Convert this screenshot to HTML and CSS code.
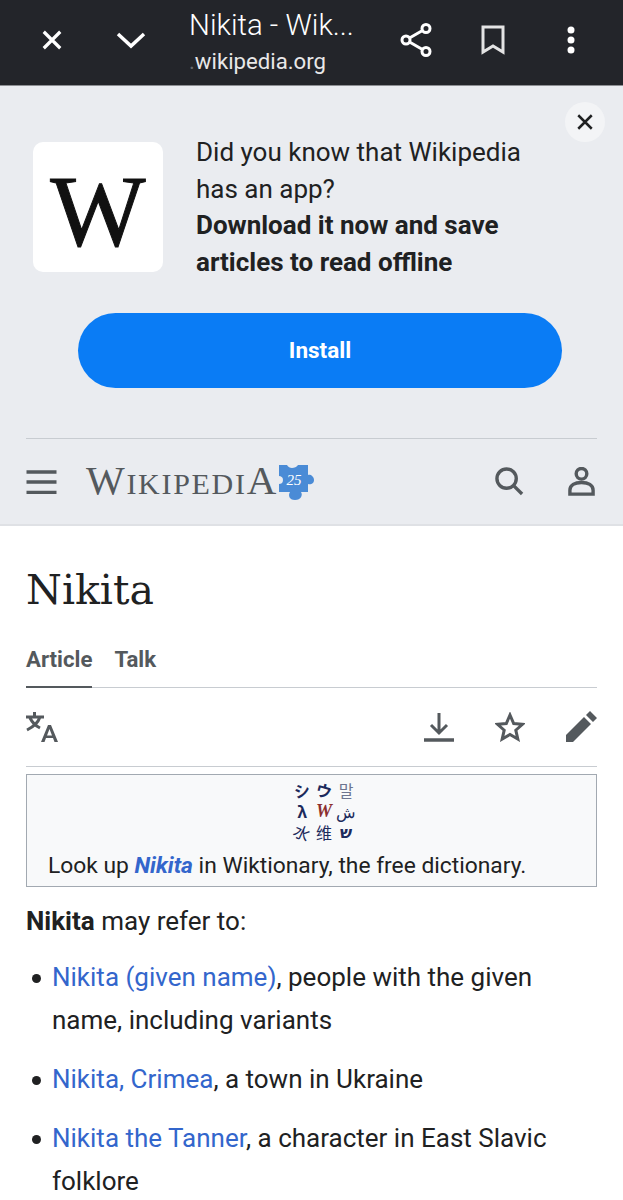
FILE: index.html
```html
<!DOCTYPE html>
<html lang="en">

<head>
    <meta charset="UTF-8">
    <meta name="viewport" content="width=device-width, initial-scale=1.0">
    <title>Nikita - Wikipedia</title>
    <link rel="stylesheet" href="styles.css">
</head>

<body>
    <div id="app">
        <nav class="tab-bar">
            <svg class="tab-icon tab-close" viewBox="0 0 24 24"><path d="M3 3 21 21M21 3 3 21" /></svg>
            <svg class="tab-icon tab-down" viewBox="0 0 30 18"><path d="M2 3 15 15 28 3" /></svg>
            <div class="tab-title">
                <div class="tab-name">Nikita - Wik...</div>
                <div class="tab-url"><span class="tab-dot">.</span>wikipedia.org</div>
            </div>
            <svg class="tab-icon tab-share" viewBox="0 0 32 34">
                <circle cx="6" cy="17" r="4" />
                <circle cx="26" cy="5.500" r="4" />
                <circle cx="26" cy="28.500" r="4" />
                <path d="M9.500 15 22.500 7.500M9.500 19 22.500 26.500" />
            </svg>
            <svg class="tab-icon tab-mark" viewBox="0 0 24 30"><path d="M2 2H22V27L12 21 2 27Z" /></svg>
            <svg class="tab-more" viewBox="0 0 8 28">
                <circle cx="4" cy="4" r="3.500" />
                <circle cx="4" cy="14" r="3.500" />
                <circle cx="4" cy="24" r="3.500" />
            </svg>
        </nav>

        <section class="banner">
            <button class="banner-close">
                <svg viewBox="0 0 16 16"><path d="M2 2 14 14M14 2 2 14" /></svg>
            </button>
            <div class="banner-row">
                <div class="app-logo">W</div>
                <p class="banner-text">Did you know that Wikipedia has an app?<br><b>Download it now and save articles to read offline</b></p>
            </div>
            <button class="install">Install</button>
        </section>

        <header class="site-header">
            <div class="header-inner">
                <svg class="hamburger" viewBox="0 0 30 24"><path d="M0 2H30M0 12H30M0 22.500H30" /></svg>
                <div class="wordmark"><span class="big">W</span>IKIPEDI<span class="big">A</span></div>
                <svg class="puzzle" viewBox="0 0 36 36">
                    <path d="M1 1H9C10 3 12 4 14 4S19 3 20 1H30V11C32 10 36 12 36 16S32 21 30 20V28H23C25 31 23 36 17 36S10 31 12 28H1V20C3 20 5 19 5 16S3 12 1 12Z" />
                    <text x="16" y="21" class="puzzle-num">25</text>
                </svg>
                <svg class="head-icon search" viewBox="0 0 30 30">
                    <circle cx="12" cy="12" r="10" />
                    <path d="M19 19 28 28" />
                </svg>
                <svg class="head-icon user" viewBox="0 0 30 30">
                    <circle cx="15" cy="7" r="5.500" />
                    <path d="M3 28V24C3 19 8 16 15 16S27 19 27 24V28Z" />
                </svg>
            </div>
        </header>

        <main class="article">
            <h1>Nikita</h1>
            <div class="tabs">
                <span class="tab active">Article</span>
                <span class="tab">Talk</span>
            </div>
            <div class="tools">
                <svg class="tool lang" viewBox="0 0 32 30">
                    <path class="line" d="M0 5H18M8.500 0V5M14 5C12 11 7 15 1 18M4 6C6 10 10 14 14 16" />
                    <path class="solid" fill-rule="evenodd" d="M15 30 22 13H25L32 30H28.500L27 26H20L18.500 30ZM21 23.500H26L23.500 17Z" />
                </svg>
                <svg class="tool dl" viewBox="0 0 30 30">
                    <path class="line" d="M15 1V20M7 13 15 21 23 13" />
                    <path class="line thick" d="M0 28H30" />
                </svg>
                <svg class="tool star" viewBox="0 0 30 30">
                    <path class="line" d="M15 3 18.700 11.500 27.500 12.300 20.800 18.200 22.800 27 15 22.400 7.200 27 9.200 18.200 2.500 12.300 11.300 11.500Z" />
                </svg>
                <svg class="tool pen" viewBox="0 0 32 32">
                    <path class="solid" d="M1 31V24L19 6 26 13 8 31ZM21 4 25 0 32 7 28 11Z" />
                </svg>
            </div>

            <div class="wikt-box">
                <div class="wikt-logo">
                    <span class="g1">シ</span><span class="g2">ウ</span><span class="g3">말</span>
                    <span class="g4">λ</span><span class="g5">W</span><span class="g6">ش</span>
                    <span class="g7">水</span><span class="g8">维</span><span class="g9">ש</span>
                </div>
                <div class="wikt-text">Look up <a href="#"><b><i>Nikita</i></b></a> in Wiktionary, the free dictionary.</div>
            </div>

            <p class="lead"><b>Nikita</b> may refer to:</p>
            <ul class="refs">
                <li><a href="#">Nikita (given name)</a>, people with the given name, including variants</li>
                <li><a href="#">Nikita, Crimea</a>, a town in Ukraine</li>
                <li><a href="#">Nikita the Tanner</a>, a character in East Slavic folklore</li>
            </ul>
        </main>
    </div>
</body>

</html>
```
FILE: styles.css
```css
html,
body {
    height: 100%;
    margin: 0;
    padding: 0;
    overflow: hidden;
    background-color: white;
    font-family: Roboto, "Liberation Sans", sans-serif;
}


#app {
    display: flex;
    flex-direction: column;
    height: 1200px;
    overflow: hidden;
}


.tab-bar {
    display: flex;
    align-items: center;
    height: 85px;
    flex: none;
    background-color: #23252a;
    border-bottom: 1px solid #8d8f93;
    color: white;
}

.tab-icon {
    flex: none;
    fill: none;
    stroke: white;
    stroke-width: 3.500;
    margin-top: -6px;
}

.tab-close {
    width: 22px;
    height: 22px;
    margin-left: 41px;
}

.tab-down {
    width: 30px;
    height: 18px;
    margin-left: 53px;
}

.tab-title {
    width: 182px;
    margin-left: 43px;
    flex: none;
    margin-top: -1px;
}

.tab-name {
    font-size: 29.400px;
    font-weight: 300;
    line-height: 34px;
}

.tab-url {
    font-size: 22.200px;
    line-height: 30px;
    margin-top: 4px;
    color: #e8e8e8;
}

.tab-dot {
    color: #66686c;
}

.tab-share {
    width: 32px;
    height: 34px;
    margin-left: 29px;
    stroke-width: 3;
}

.tab-mark {
    width: 24px;
    height: 30px;
    margin-left: 49px;
    stroke-width: 3;
    stroke: #e4e4e4;
}

.tab-more {
    width: 8px;
    height: 28px;
    margin-left: 62px;
    margin-top: -6px;
    fill: white;
}


.banner {
    position: relative;
    flex: none;
    height: 352px;
    box-sizing: border-box;
    background-color: #eaecf0;
    padding-top: 48px;
}

.banner-close {
    position: absolute;
    top: 16px;
    right: 18px;
    width: 40px;
    height: 40px;
    padding: 11px;
    border: 0;
    border-radius: 50%;
    background-color: #f3f4f6;
}

.banner-close svg {
    display: block;
    fill: none;
    stroke: #202122;
    stroke-width: 2.200;
}

.banner-row {
    display: flex;
    align-items: center;
    padding-left: 33px;
}

.app-logo {
    width: 130px;
    height: 130px;
    flex: none;
    background-color: white;
    border-radius: 10px;
    color: #111;
    font-family: "Liberation Serif", serif;
    font-size: 101px;
    line-height: 140px;
    text-align: center;
    -webkit-text-stroke: 1px #111;
}

.banner-text {
    margin: 0 0 0 33px;
    width: 350px;
    font-size: 26px;
    line-height: 36.500px;
    color: #202122;
}

.install {
    display: block;
    width: 484px;
    height: 75px;
    margin: 33px 0 0 78px;
    padding: 0 0 2px;
    border: 0;
    border-radius: 38px;
    background-color: #0a7cf5;
    color: white;
    font-family: inherit;
    font-size: 22.500px;
    font-weight: 700;
}


.site-header {
    flex: none;
    height: 88px;
    box-sizing: border-box;
    background-color: #eaecf0;
    border-bottom: 2px solid #dfe1e5;
    padding: 0 26px;
}

.header-inner {
    display: flex;
    align-items: center;
    height: 86px;
    border-top: 1px solid #c8ccd1;
    box-sizing: border-box;
}

.hamburger {
    width: 31px;
    height: 24px;
    flex: none;
    stroke: #54595d;
    stroke-width: 3.500;
    fill: none;
}

.wordmark {
    margin-left: 29px;
    flex: none;
    font-family: "Liberation Serif", serif;
    font-size: 30px;
    letter-spacing: 1.700px;
    color: #54595d;
    line-height: 44px;
}

.wordmark .big {
    font-size: 41px;
}

.puzzle {
    width: 36px;
    height: 36px;
    flex: none;
    overflow: visible;
    fill: #4a8bd6;
}

.puzzle-num {
    fill: white;
    font-family: "Liberation Serif", serif;
    font-style: italic;
    font-size: 15px;
    text-anchor: middle;
}

.head-icon {
    width: 29px;
    height: 29px;
    flex: none;
    fill: none;
    stroke: #54595d;
    stroke-width: 3.500;
}

.search {
    margin-left: auto;
    margin-right: 1px;
}

.user {
    margin-left: 42px;
    margin-right: 1px;
}


.article {
    padding: 0 26px;
    color: #202122;
}

h1 {
    margin: 34px 0 0;
    font-family: "DejaVu Serif", serif;
    font-size: 41px;
    font-weight: 400;
    line-height: 60px;
}

.tabs {
    display: flex;
    gap: 22px;
    margin-top: 26px;
    border-bottom: 1px solid #c8ccd1;
}

.tab {
    font-size: 22.200px;
    font-weight: 700;
    line-height: 27px;
    padding-bottom: 13px;
    margin-bottom: -1px;
    color: #54595d;
}

.tab.active {
    border-bottom: 2px solid #54595d;
}

.tools {
    display: flex;
    align-items: center;
    height: 78px;
    border-bottom: 1px solid #c8ccd1;
}

.tool {
    flex: none;
}

.line {
    fill: none;
    stroke: #54595d;
    stroke-width: 3;
}

.thick {
    stroke-width: 3.500;
}

.solid {
    fill: #54595d;
}

.lang {
    width: 32px;
    height: 30px;
}

.dl {
    width: 30px;
    height: 30px;
    margin-left: auto;
}

.star {
    width: 30px;
    height: 30px;
    margin-left: 41px;
}

.pen {
    width: 32px;
    height: 32px;
    margin-left: 40px;
}


.wikt-box {
    margin-top: 7px;
    height: 113px;
    box-sizing: border-box;
    border: 1px solid #a2a9b1;
    background-color: #f8f9fa;
    padding: 5px 21px 0;
}

.wikt-logo {
    display: grid;
    grid-template-columns: repeat(3, 22px);
    grid-auto-rows: 21px;
    justify-content: center;
    justify-items: center;
    align-items: center;
    padding-left: 25px;
    color: #1c2a5c;
    font-size: 16px;
    line-height: 19px;
    font-family: "Noto Sans CJK JP", sans-serif;
}

.wikt-logo span {
    display: block;
}

.g1 {
    transform: rotate(-10deg);
    font-weight: 700;
}

.g2 {
    transform: rotate(15deg);
    font-weight: 700;
}

.wikt-logo .g3 {
    color: #6d7590;
}

.wikt-logo .g4 {
    font-weight: 700;
}

.wikt-logo .g5 {
    color: #8c2f2f;
    font-family: "Liberation Serif", serif;
    font-style: italic;
    font-weight: 700;
    font-size: 18px;
}

.g7 {
    transform: rotate(25deg);
}

.wikt-logo .g9 {
    font-family: "DejaVu Sans", sans-serif;
    font-weight: 700;
}

.wikt-text {
    margin-top: 9px;
    font-size: 22.800px;
    line-height: 27px;
}

a {
    color: #3366cc;
    text-decoration: none;
}

.lead {
    margin: 19px 0 0;
    font-size: 26px;
    line-height: 30px;
}

.refs {
    margin: 20px 0 0;
    padding: 0 0 0 26px;
    list-style: none;
    font-size: 26px;
    line-height: 43px;
}

.refs li {
    position: relative;
    margin-bottom: 16px;
}

.refs li::before {
    content: "";
    position: absolute;
    left: -20px;
    top: 18px;
    width: 9px;
    height: 9px;
    border-radius: 50%;
    background-color: #202122;
}
```
